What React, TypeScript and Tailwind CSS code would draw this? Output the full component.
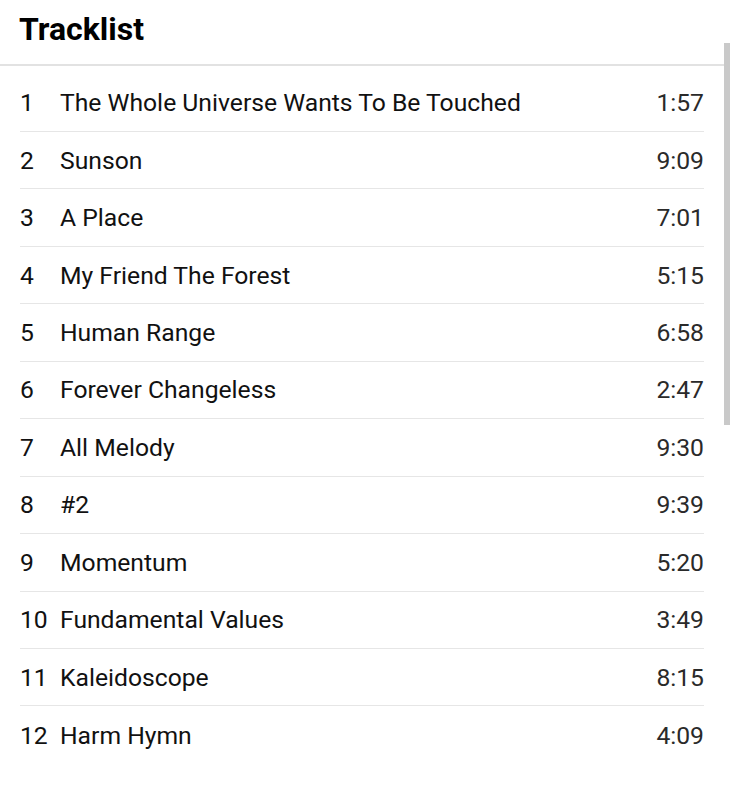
import React from 'react';

const TRACKS: [string, string][] = [
  ['The Whole Universe Wants To Be Touched', '1:57'],
  ['Sunson', '9:09'],
  ['A Place', '7:01'],
  ['My Friend The Forest', '5:15'],
  ['Human Range', '6:58'],
  ['Forever Changeless', '2:47'],
  ['All Melody', '9:30'],
  ['#2', '9:39'],
  ['Momentum', '5:20'],
  ['Fundamental Values', '3:49'],
  ['Kaleidoscope', '8:15'],
  ['Harm Hymn', '4:09'],
];

const App: React.FC = () => {
  return (
    <div className="relative w-[730px] h-[794px] bg-white overflow-hidden font-['Roboto',sans-serif] text-[#111]">
      <div className="h-[66px] border-b-2 border-[#e2e2e2] mr-[6px] px-[19px] pt-[9px]">
        <h2 className="text-[32px] font-bold leading-[40px] text-black">Tracklist</h2>
      </div>
      <div className="absolute right-0 top-[43px] w-[6px] h-[382px] bg-[#c9c9c9]" />
      <ul className="px-[20px] pr-[26px] pt-[9px]">
        {TRACKS.map(([title, time], i) => (
          <li
            key={title}
            className={`flex items-center text-[24.7px] ${
              i === 0 ? 'h-[57px]' : 'h-[57.45px]'
            } ${i < TRACKS.length - 1 ? 'border-b border-[#e6e6e6]' : ''}`}
          >
            <span className="w-[40px] shrink-0">{i + 1}</span>
            <span className="flex-1">{title}</span>
            <span className="text-[#2a2a2a]">{time}</span>
          </li>
        ))}
      </ul>
    </div>
  );
};

export default App;
